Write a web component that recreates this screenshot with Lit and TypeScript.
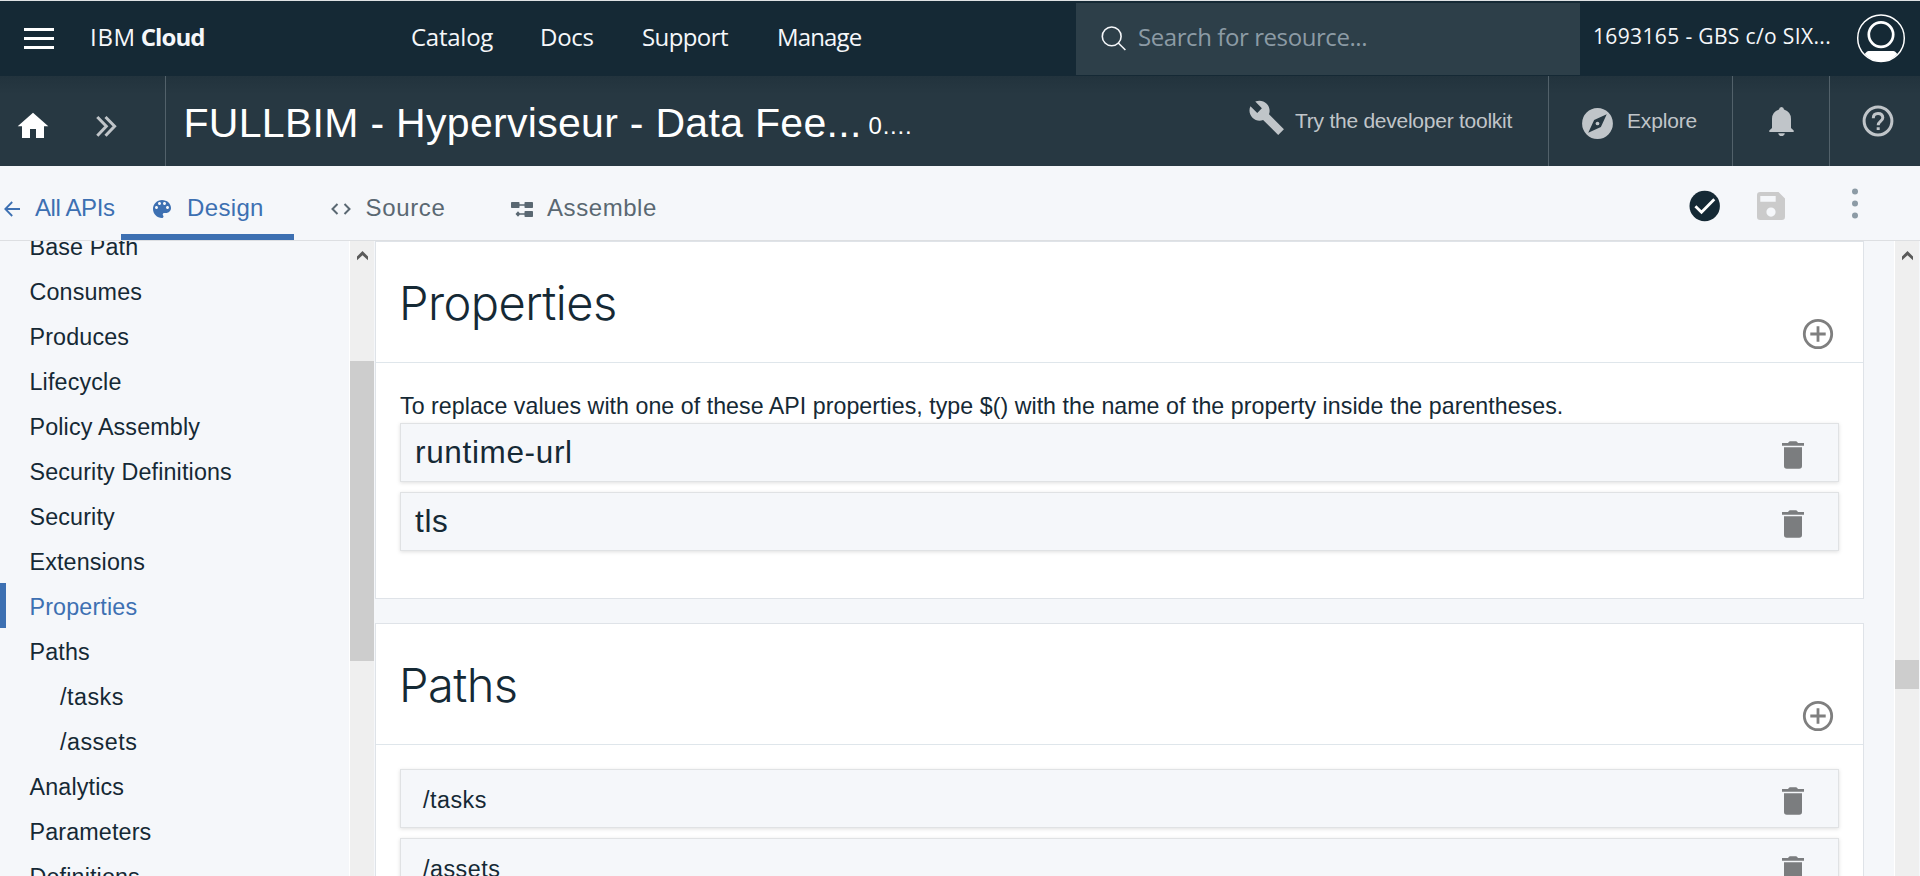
import { LitElement, html, css, svg } from "lit";
import { classMap } from "lit/directives/class-map.js";

const trash = html`<svg class="trash" width="22" height="28" viewBox="0 0 22 28">
  <path fill="#7b7d7f" d="M0 2H6L7 .7Q7.3.2 8 .2H14Q14.7.2 15 .7L16 2H22V4.7H0zM2 6.3H20V25Q20 27.7 17.2 27.7H4.8Q2 27.7 2 25z" />
</svg>`;

const plus = html`<svg class="plus" width="32" height="32" viewBox="0 0 32 32" fill="none" stroke="#7f7f7f">
  <circle cx="16" cy="16" r="13.7" stroke-width="2.8" />
  <path stroke-width="2.8" d="M16 8.3V23.7M8.3 16H23.7" />
</svg>`;

class ScrollTrack extends LitElement {
  static properties = { top: { type: Number }, size: { type: Number } };
  declare top: number;
  declare size: number;
  static styles = css`
    :host {
      display: flex;
      flex-direction: column;
      width: 25px;
      box-sizing: border-box;
      border-left: 1px solid #fff;
      background: #efefef;
    }
    .arrow { display: block; margin: 10px 0 0 7px; }
    .thumb { background: #cdcdcd; width: 24px; flex: none; }
  `;
  render() {
    return html`<svg class="arrow" width="11" height="10" viewBox="0 0 11 10">
        <path fill="#5a5a5a" d="M5.5 0L11 5.5V9.3L5.5 4.2 0 9.3V5.5z" />
      </svg>
      <div class="thumb" style="margin-top:${this.top - 20}px;height:${this.size}px"></div>`;
  }
}
customElements.define("scroll-track", ScrollTrack);

interface Entry { label: string; sub?: boolean; active?: boolean }

const entries: Entry[] = [
  { label: "Base Path" },
  { label: "Consumes" },
  { label: "Produces" },
  { label: "Lifecycle" },
  { label: "Policy Assembly" },
  { label: "Security Definitions" },
  { label: "Security" },
  { label: "Extensions" },
  { label: "Properties", active: true },
  { label: "Paths" },
  { label: "/tasks", sub: true },
  { label: "/assets", sub: true },
  { label: "Analytics" },
  { label: "Parameters" },
  { label: "Definitions" },
];

class AppRoot extends LitElement {
  static styles = css`
    :host {
      display: flex;
      flex-direction: column;
      height: 876px;
      overflow: hidden;
      box-sizing: border-box;
      border-top: 1px solid #dfe2e4;
      background: #f5f7fa;
      color: #152935;
      font-family: "Liberation Sans", Arial, sans-serif;
      white-space: nowrap;
    }
    svg { display: block; flex: none; }

    .top {
      display: flex;
      height: 75px;
      flex: none;
      background: #152935;
      color: #f5f7fa;
      font: 24px/71px "Open Sans", sans-serif;
    }
    .burger { margin: 27px 0 0 24px; }
    .brand { margin-left: 36px; width: 321px; }
    .brand .ibm { letter-spacing: 0.7px; }
    .brand b { font-weight: 700; letter-spacing: -0.9px; margin-left: -1.5px; }
    .menu { display: grid; grid-template-columns: 129px 102px 135px 299px; letter-spacing: -0.6px; }
    .menu .wide { letter-spacing: -0.25px; }
    .menu .last { letter-spacing: -0.85px; }
    .search {
      display: flex;
      width: 504px;
      height: 72px;
      margin-top: 2px;
      background: #2d3f49;
      color: #8c9ba5;
      line-height: 68px;
      letter-spacing: -0.42px;
    }
    .search svg { margin: 23px 12px 0 25px; }
    .account { margin-left: 13px; width: 263px; font-size: 21px; line-height: 71px; letter-spacing: 0.36px; }
    .avatar { margin-top: 13px; }

    .bar {
      display: flex;
      height: 90px;
      flex: none;
      background: linear-gradient(#22333d, #273842 18px);
      color: #c0c5c9;
      font-size: 21px;
      line-height: 90px;
    }
    .lead { display: flex; width: 165px; border-right: 1px solid #52616a; }
    .home { margin: 36px 0 0 17px; }
    .chev { margin: 39px 0 0 47px; }
    .title { margin-left: 17.5px; width: 685px; font-size: 41px; line-height: 94px; letter-spacing: 0.3px; color: #fff; }
    .version { width: 379.5px; font-size: 24px; letter-spacing: 0.8px; color: #fff; line-height: 100px; }
    .tool { display: flex; box-sizing: border-box; border-right: 1px solid #52616a; }
    .toolkit { width: 301px; letter-spacing: -0.25px; }
    .toolkit svg { margin: 23px 10px 0 0; }
    .explore { width: 184px; letter-spacing: -0.17px; }
    .explore svg { margin: 29px 11px 0 30px; }
    .bell { width: 97px; }
    .bell svg { margin: 31px 0 0 36px; }
    .help { margin: 29px 0 0 32px; }

    .tabs {
      display: flex;
      height: 74px;
      flex: none;
      border-bottom: 1px solid #dddfe2;
      font-size: 24px;
      line-height: 84px;
      color: #5a6872;
    }
    .back { display: flex; width: 121px; color: #3d70b2; letter-spacing: -0.4px; }
    .back svg { margin: 35px 15px 0 4px; }
    .tab { display: flex; box-sizing: border-box; }
    .design { width: 173px; color: #3d70b2; border-bottom: 6px solid #3d70b2; letter-spacing: 0.35px; }
    .design svg { margin: 34px 16px 0 32px; }
    .source { width: 198px; letter-spacing: 0.65px; }
    .source svg { margin: 37px 14.5px 0 37px; }
    .assemble { width: 1197px; letter-spacing: 0.57px; }
    .assemble svg { margin: 35px 14px 0 19px; }
    .done { margin-top: 24px; }
    .save { margin: 26px 67px 0 35.5px; }
    .dots { margin-top: 22px; }

    .work { display: flex; flex: 1; min-height: 0; overflow: hidden; }
    .side { width: 349px; font-size: 23.3px; letter-spacing: 0.15px; line-height: 42px; overflow: hidden; }
    .entries { margin-top: -18px; }
    .entry { height: 45px; box-sizing: border-box; padding: 2.5px 0 0 29.5px; }
    .entry.sub { padding-left: 60px; letter-spacing: 0.5px; }
    .entry.active { border-left: 6px solid #3d70b2; padding-left: 23.5px; color: #3d70b2; }

    .main { width: 1489px; display: flex; flex-direction: column; gap: 24px; margin: 0 30px 0 1px; }
    .card { flex: none; box-sizing: border-box; background: #fff; border: 1px solid #dfe3e8; }
    .head { display: flex; justify-content: space-between; height: 120px; border-bottom: 1px solid #dfe6eb; }
    .head h2 {
      margin: 0 0 0 23px;
      font: 300 47px/122px "Inter", "Liberation Sans", sans-serif;
      letter-spacing: -0.55px;
    }
    .plus { margin: 76px 29px 0 0; }
    .body { display: flex; flex-direction: column; gap: 10px; padding: 0 24px 47px; }
    .body.paths { padding-top: 24px; }
    .hint { font-size: 23.2px; line-height: 34px; letter-spacing: 0.04px; margin: 26px 0 -10px; }
    .row {
      display: flex;
      justify-content: space-between;
      align-items: center;
      height: 59px;
      box-sizing: border-box;
      border: 1px solid #e0e2e4;
      background: #f5f7fa;
      box-shadow: 0 1px 4px rgba(0, 0, 0, 0.13);
      padding: 0 34px 0 14px;
      font-size: 31.5px;
      letter-spacing: 0.65px;
      line-height: 57px;
    }
    .row .trash { margin-top: 5px; }
    .paths .row { font-size: 23.3px; letter-spacing: 0.5px; padding-left: 22px; }
    .paths .row span { padding-top: 3px; }
  `;

  private row(name: string) {
    return html`<div class="row"><span>${name}</span>${trash}</div>`;
  }

  render() {
    return html`
      <header class="top">
        <svg class="burger" width="30" height="21" fill="#fff"><path d="M0 0H30V3H0zM0 9H30V12H0zM0 18H30V21H0z" /></svg>
        <div class="brand"><span class="ibm">IBM</span> <b>Cloud</b></div>
        <nav class="menu"><span class="wide">Catalog</span><span class="wide">Docs</span><span>Support</span><span class="last">Manage</span></nav>
        <div class="search">
          <svg width="25" height="25" viewBox="0 0 25 25" fill="none" stroke="#f5f7fa" stroke-width="1.6">
            <circle cx="10.7" cy="10.4" r="9.4" /><path d="M17.3 17L24.4 24" />
          </svg>
          <span>Search for resource...</span>
        </div>
        <div class="account">1693165 - GBS c/o SIX...</div>
        <svg class="avatar" width="50" height="50" viewBox="0 0 50 50" fill="none" stroke="#fff">
          <circle cx="25" cy="24.3" r="23.3" stroke-width="1.5" />
          <circle cx="25" cy="20.6" r="12.2" stroke-width="2.7" />
          <path fill="#fff" stroke="none" d="M8.6 40L11 37.4Q11.6 37 12.5 37H37.5Q38.4 37 39 37.4L41.4 40Q34.5 47.6 25 47.6T8.6 40z" />
        </svg>
      </header>

      <div class="bar">
        <div class="lead">
          <svg class="home" width="32" height="27" viewBox="0 0 32 27">
            <path fill="#fff" d="M16 .8L31.3 14.2H27V26H19V17H13V26H5V14.2H.7z" />
          </svg>
          <svg class="chev" width="22" height="23" viewBox="0 0 22 23" fill="none" stroke="#c0c5c9" stroke-width="3">
            <path d="M1.3 2L10.3 11.3 1.3 20.8M9.5 2L18.6 11.3 9.5 20.8" />
          </svg>
        </div>
        <div class="title">FULLBIM - Hyperviseur - Data Fee...</div>
        <div class="version">0....</div>
        <div class="tool toolkit">
          <svg width="37" height="37" viewBox="0 0 24 24">
            <path fill="#c0c5c9" d="M23.3 19.7L13.6 9.9c.9-2.3.4-5-1.5-6.9-2-2-5-2.4-7.4-1.3L9 6 6 9 1.6 4.7C.4 7.1.9 10.1 2.9 12.1c1.9 1.9 4.6 2.4 6.9 1.5l9.8 9.8z" />
          </svg>
          <span>Try the developer toolkit</span>
        </div>
        <div class="tool explore">
          <svg width="37" height="37" viewBox="0 0 24 24">
            <path fill="#c0c5c9" fill-rule="evenodd" d="M12 2a10 10 0 1 0 0 20 10 10 0 1 0 0-20zM14.19 14.19L6 18l3.81-8.19L18 6z" />
            <circle cx="12" cy="12" r="1.2" fill="#c0c5c9" />
          </svg>
          <span>Explore</span>
        </div>
        <div class="tool bell">
          <svg width="25" height="30" viewBox="0 0 25 30" fill="#c0c5c9">
            <path d="M12.5 0Q14.8 0 15 2.6Q22 5 22 12V21L24.7 23.5V25H.3V23.5L3 21V12Q3 5 10 2.6Q10.2 0 12.5 0z" />
            <path d="M9.2 26.2H15.8Q15.4 29 12.5 29T9.2 26.2z" />
          </svg>
        </div>
        <svg class="help" width="32" height="32" viewBox="0 0 32 32" fill="none" stroke="#c0c5c9">
          <circle cx="16" cy="16" r="13.9" stroke-width="3" />
          <path stroke-width="3" d="M11.3 13.2Q11.3 8.4 16 8.4T20.8 12.8C20.8 16 16.2 16.2 16.2 20.2M16.2 22.2V25" />
        </svg>
      </div>

      <div class="tabs">
        <div class="back">
          <svg width="16" height="16" viewBox="0 0 16 16" fill="none" stroke="#3d70b2" stroke-width="1.8"><path d="M8.2 1L1.3 8l6.9 7M1.3 8H16" /></svg>
          <span>All APIs</span>
        </div>
        <div class="tab design">
          <svg width="18" height="18" viewBox="3 3 18 18">
            <path fill="#3d70b2" d="M12 3c-4.97 0-9 4.03-9 9s4.03 9 9 9c.83 0 1.5-.67 1.5-1.5 0-.39-.15-.74-.39-1.01-.23-.26-.38-.61-.38-.99 0-.83.67-1.5 1.5-1.5H16c2.76 0 5-2.24 5-5 0-4.42-4.03-8-9-8zm-5.5 9c-.83 0-1.5-.67-1.5-1.5S5.67 9 6.5 9 8 9.67 8 10.5 7.33 12 6.5 12zm3-4C8.67 8 8 7.33 8 6.5S8.67 5 9.5 5s1.5.67 1.5 1.5S10.33 8 9.5 8zm5 0c-.83 0-1.5-.67-1.5-1.5S13.67 5 14.5 5s1.5.67 1.5 1.5S15.33 8 14.5 8zm3 4c-.83 0-1.5-.67-1.5-1.5S16.67 9 17.5 9s1.5.67 1.5 1.5-.67 1.5-1.5 1.5z" />
          </svg>
          <span>Design</span>
        </div>
        <div class="tab source">
          <svg width="20" height="12" viewBox="0 0 20 12" fill="none" stroke="#5a6872" stroke-width="2"><path d="M6.5 1L1.5 6l5 5M13.5 1l5 5-5 5" /></svg>
          <span>Source</span>
        </div>
        <div class="tab assemble">
          <svg width="22" height="16" viewBox="0 0 22 16" fill="#5a6872">
            <rect x="0" y="1" width="8.5" height="6" rx=".8" /><rect x="13.5" y="1" width="8.5" height="6" rx=".8" />
            <rect x="13.5" y="10" width="8.5" height="6" rx=".8" />
            <path d="M8 3.3H14V4.7H8zM4.5 13L7 10.3 8.8 12.3H14V13.7H8.8L7 15.7z" />
          </svg>
          <span>Assemble</span>
        </div>
        <svg class="done" width="32" height="32" viewBox="0 0 32 32">
          <circle cx="15.7" cy="16" r="15.2" fill="#152935" />
          <path fill="none" stroke="#fff" stroke-width="2.8" d="M6.4 16.3L12.5 22.2 25.3 9.3" />
        </svg>
        <svg class="save" width="28" height="28" viewBox="0 0 28 28">
          <path fill="#cbcbcb" fill-rule="evenodd" d="M3.2 0H21.5L28 6.5V24.8Q28 28 24.8 28H3.2Q0 28 0 24.8V3.2Q0 0 3.2 0zM3.3 4V9.7H18.7V4zM14 15.5a4.6 4.6 0 1 0 0 9.2 4.6 4.6 0 1 0 0-9.2z" />
        </svg>
        <svg class="dots" width="6" height="32" fill="#8c9ba5">
          ${[3.5, 15.5, 27.5].map((y) => svg`<circle cx="3" cy=${y} r="3" />`)}
        </svg>
      </div>

      <div class="work">
        <nav class="side">
          <div class="entries">
            ${entries.map((e) => html`<div class=${classMap({ entry: true, sub: !!e.sub, active: !!e.active })}>${e.label}</div>`)}
          </div>
        </nav>
        <scroll-track .top=${120} .size=${300}></scroll-track>
        <main class="main">
          <section class="card">
            <div class="head"><h2>Properties</h2>${plus}</div>
            <div class="body">
              <div class="hint">To replace values with one of these API properties, type $() with the name of the property inside the parentheses.</div>
              ${["runtime-url", "tls"].map((n) => this.row(n))}
            </div>
          </section>
          <section class="card">
            <div class="head"><h2>Paths</h2>${plus}</div>
            <div class="body paths">${["/tasks", "/assets"].map((n) => this.row(n))}</div>
          </section>
        </main>
        <scroll-track .top=${419} .size=${29}></scroll-track>
      </div>
    `;
  }
}
customElements.define("app-root", AppRoot);
